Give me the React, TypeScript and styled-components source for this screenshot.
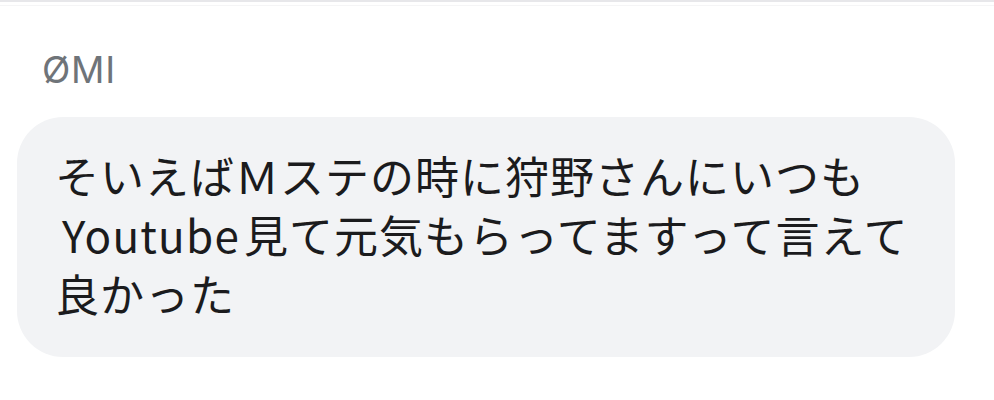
import React from 'react'
import styled, { createGlobalStyle } from 'styled-components'

const GlobalStyle = createGlobalStyle`
  html, body {
    margin: 0;
    padding: 0;
    background: #ffffff;
  }
`

const Page = styled.div`
  width: 994px;
  height: 400px;
  overflow: hidden;
  box-sizing: border-box;
  border-top: 2px solid #e7e7ea;
  display: flex;
  flex-direction: column;
`

const HairLine = styled.div`
  margin-top: 3px;
  height: 1px;
  background: #f5f5f6;
`

const Message = styled.div`
  display: flex;
  flex-direction: column;
  align-items: flex-start;
  padding: 45px 0 0 17px;
`

const SenderName = styled.div`
  margin-left: 25px;
  font-family: Inter, 'Noto Sans', sans-serif;
  font-size: 37px;
  line-height: 37px;
  color: #6f7479;
  letter-spacing: 0.8px;
`

const Bubble = styled.div`
  margin-top: 29px;
  width: 938px;
  box-sizing: border-box;
  padding: 29px 20px 34px 38px;
  border-radius: 46px;
  background: #f2f3f5;
  font-family: 'Noto Sans CJK JP', 'Noto Sans', sans-serif;
  font-size: 44px;
  line-height: 59px;
  color: #1b1b1d;
  letter-spacing: 1px;
`

const Line = styled.div`
  white-space: nowrap;
`

const Latin = styled.span`
  margin: 0 4px 0 7px;
  letter-spacing: 1.2px;
`

export default function App() {
  return (
    <>
      <GlobalStyle />
      <Page>
        <HairLine />
        <Message>
          <SenderName>ØMI</SenderName>
          <Bubble>
            <Line>そいえばＭステの時に狩野さんにいつも</Line>
            <Line>
              <Latin>Youtube</Latin>見て元気もらってますって言えて
            </Line>
            <Line>良かった</Line>
          </Bubble>
        </Message>
      </Page>
    </>
  )
}
